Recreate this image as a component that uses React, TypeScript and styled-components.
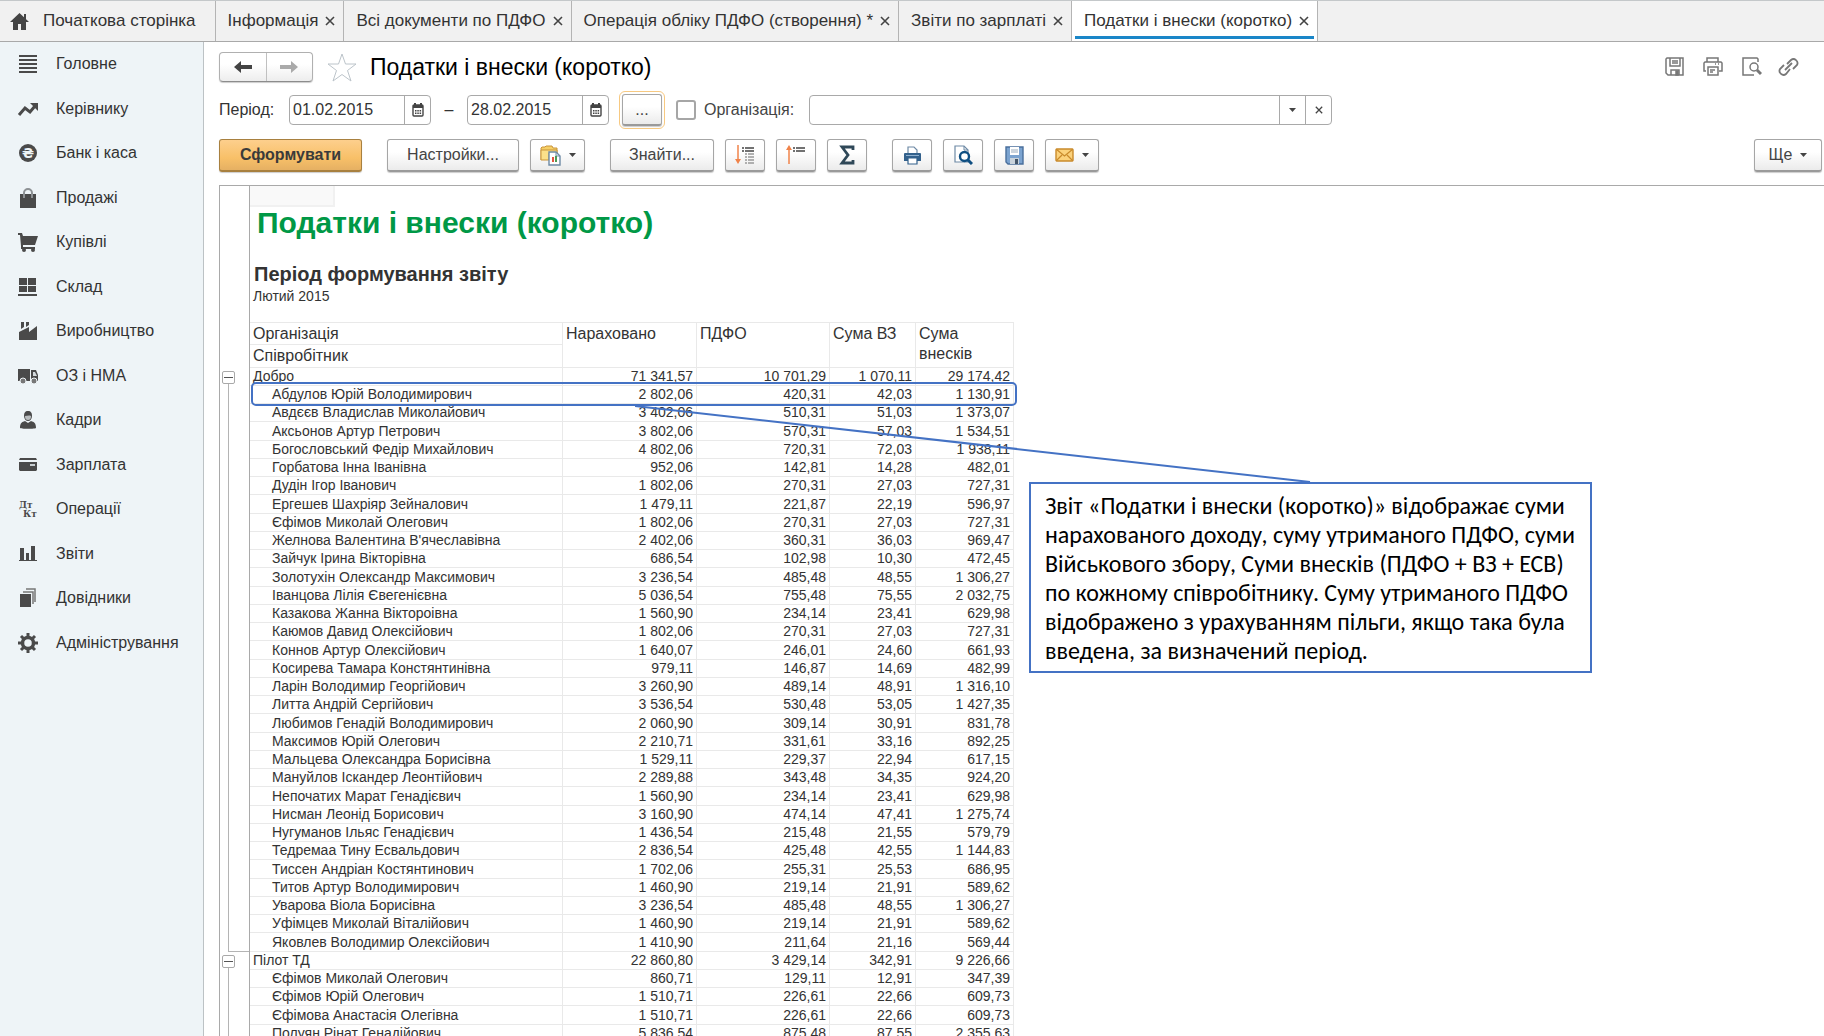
import React from 'react';
import styled, { createGlobalStyle, css } from 'styled-components';

const line = '#a9a9a9';
const grid = '#e9e9e9';
const callout = '#4472c4';

const GlobalStyle = createGlobalStyle`
  *, *::before, *::after { box-sizing: border-box; }
  body {
    margin: 0;
    background: #fff;
    color: #333;
    font: 16px/20px "Liberation Sans", Arial, sans-serif;
  }
  button, input { font: inherit; color: inherit; margin: 0; }
  button { cursor: pointer; }
`;

const Page = styled.div`
  display: flex;
  flex-direction: column;
  height: 100vh;
  overflow: hidden;
`;

/* ---------- tabs ---------- */

const TabBar = styled.header`
  display: flex;
  flex: none;
  height: 42px;
  background: #f1f1f1;
  border-top: 1px solid #c4c8ca;
  border-bottom: 1px solid ${line};
  font-size: 17px;
`;

const Tab = styled.div<{ $active?: boolean }>`
  position: relative;
  display: flex;
  align-items: center;
  padding: 0 7px 0 12px;
  gap: 6px;
  white-space: nowrap;
  border-right: 1px solid #b4b4b4;
  background: ${p => (p.$active ? '#fff' : 'transparent')};
  ${p =>
    p.$active &&
    css`
      &::after {
        content: '';
        position: absolute;
        left: 3px;
        right: 3px;
        bottom: 2px;
        height: 3px;
        background: #1a86c8;
      }
    `}
`;

const HomeTab = styled(Tab)`
  padding: 0 19px 0 10px;
  gap: 14px;
`;

const TabLabel = styled.button`
  border: 0;
  padding: 0;
  background: none;
`;

const CloseButton = styled.button`
  display: flex;
  border: 0;
  padding: 1px;
  background: none;
`;

/* ---------- side menu ---------- */

const Body = styled.div`
  display: flex;
  flex: 1;
  min-height: 0;
`;

const SideBar = styled.nav`
  flex: none;
  width: 204px;
  background: #eef4f7;
  border-right: 1px solid #bcc2c5;
`;

const Menu = styled.ul`
  list-style: none;
  margin: 0;
  padding: 0;
`;

const MenuItem = styled.li`
  height: 44px;
  &:nth-child(even) { height: 45px; }
`;

const MenuLink = styled.a`
  display: flex;
  align-items: center;
  gap: 17px;
  height: 100%;
  padding-left: 17px;
  color: #333;
  text-decoration: none;
`;

/* ---------- form ---------- */

const Main = styled.main`
  display: flex;
  flex: 1;
  flex-direction: column;
  min-width: 0;
  padding: 10px 0 0 15px;
`;

const TitleRow = styled.div`
  display: flex;
  align-items: center;
  height: 30px;
  padding-right: 24px;
`;

const NavButtons = styled.div`
  display: flex;
  width: 94px;
  height: 30px;
  border: 1px solid #b0b0b0;
  border-bottom-color: #8c8c8c;
  border-radius: 4px;
  background: linear-gradient(#fff 40%, #ededed);
  box-shadow: 0 1px 1px #ccc;
`;

const NavButton = styled.button`
  display: flex;
  flex: 1;
  align-items: center;
  justify-content: center;
  border: 0;
  padding: 0;
  background: none;
  & + & { border-left: 1px solid #c0c0c0; }
`;

const PlainButton = styled.button`
  display: flex;
  border: 0;
  padding: 0;
  background: none;
`;

const StarButton = styled(PlainButton)`
  margin: 0 13px 0 14px;
`;

const Title = styled.h1`
  flex: 1;
  margin: 0;
  color: #000;
  font-size: 23px;
  line-height: 30px;
  font-weight: 400;
`;

const WindowTools = styled.div`
  display: flex;
  gap: 16px;
`;

const FilterRow = styled.div`
  display: flex;
  align-items: center;
  height: 30px;
  margin-top: 13px;
`;

const FieldLabel = styled.label`
  flex: none;
`;

const Field = styled.div<{ $width: number }>`
  display: flex;
  flex: 0 1 ${p => p.$width}px;
  height: 30px;
  border: 1px solid ${line};
  border-radius: 4px;
  background: #fff;
  overflow: hidden;
`;

const TextBox = styled.input`
  flex: 1;
  min-width: 0;
  border: 0;
  padding: 0 0 0 3px;
  outline: 0;
  background: none;
`;

const FieldButton = styled.button`
  display: flex;
  flex: none;
  align-items: center;
  justify-content: center;
  width: 26px;
  border: 0;
  border-left: 1px solid ${line};
  padding: 0;
  background: none;
`;

const Dash = styled.span`
  width: 36px;
  text-align: center;
`;

const CheckBox = styled.input`
  appearance: none;
  width: 20px;
  height: 20px;
  border: 2px solid #a6a6a6;
  border-radius: 3px;
  background: #fff;
`;

const Toolbar = styled.div`
  display: flex;
  justify-content: space-between;
  margin-top: 14px;
  padding-right: 2px;
`;

const ToolGroups = styled.div`
  display: flex;
  gap: 25px;
`;

const ToolGroup = styled.div`
  display: flex;
  gap: 11px;
`;

const ToolButton = styled.button<{ $width?: number; $primary?: boolean; $focused?: boolean }>`
  display: flex;
  flex: none;
  align-items: center;
  justify-content: center;
  gap: 8px;
  width: ${p => p.$width ?? 40}px;
  height: 33px;
  padding: 0;
  color: #444;
  border: 1px solid #a6a6a6;
  border-bottom: 2px solid #9a9a9a;
  border-radius: 3px;
  background: linear-gradient(#fff 40%, #ebebeb);
  box-shadow: 0 1px 1px #ccc;
  ${p =>
    p.$primary &&
    css`
      color: #3a3a3a;
      font-weight: 700;
      border-color: #a8803f;
      background: linear-gradient(#fdcf8d, #f8c068 60%, #e5b063);
    `}
  ${p =>
    p.$focused &&
    css`
      height: 32px;
      outline: 1px solid #f7c981;
      outline-offset: 2px;
    `}
`;

const PeriodPicker = styled.div`
  margin: 0 14px 0 13px;
`;

const OrgLabel = styled(FieldLabel)`
  margin: 0 15px 0 8px;
  color: #444;
`;

const PeriodLabel = styled(FieldLabel)`
  width: 70px;
`;

/* ---------- report ---------- */

const Sheet = styled.section`
  position: relative;
  flex: 1;
  min-height: 0;
  margin-top: 13px;
  border-top: 1px solid ${line};
  border-left: 1px solid ${line};
`;

const ReportHead = styled.div`
  height: 136px;
  margin-left: 29px;
  border-left: 1px solid ${line};
`;

const ActiveCell = styled.div`
  width: 85px;
  height: 21px;
  background: #f9f9f9;
  border: solid #f1f1f1;
  border-width: 0 2px 2px 0;
`;

const ReportTitle = styled.h2`
  margin: 0;
  padding-left: 7px;
  color: #009846;
  font-size: 30px;
  line-height: 32px;
`;

const PeriodTitle = styled.h3`
  margin: 23px 0 0;
  padding-left: 4px;
  font-size: 20px;
  line-height: 24px;
`;

const PeriodValue = styled.p`
  margin: 0;
  padding-left: 3px;
  font-size: 14px;
  line-height: 20px;
`;

const Table = styled.table`
  width: 794px;
  table-layout: fixed;
  border-collapse: separate;
  border-spacing: 0;
  font-size: 14px;
  line-height: 17px;
`;

const Col = styled.col<{ $width: number }>`
  width: ${p => p.$width}px;
`;

const HeadCell = styled.th`
  height: 23px;
  padding: 1px 3px 0;
  border: solid ${grid};
  border-width: 0 1px 1px 0;
  font-size: 16px;
  line-height: 20px;
  font-weight: 400;
  text-align: left;
  vertical-align: top;
  thead tr:first-child > & { border-top-width: 1px; }
`;

const HeadGutter = styled.td`
  padding: 0;
  border-right: 1px solid ${line};
`;

const Row = styled.tr`
  height: 18px;
  &:nth-child(4n) { height: 19px; }
`;

type Mark = 'open' | 'inside' | 'last';

const Gutter = styled.td<{ $mark: Mark }>`
  padding: 0 0 0 2px;
  line-height: 0;
  vertical-align: middle;
  border-right: 1px solid ${line};
  background-image: linear-gradient(#b4b4b4, #b4b4b4), linear-gradient(#b4b4b4, #b4b4b4);
  background-repeat: no-repeat;
  background-position: 8px ${p => (p.$mark === 'open' ? 16 : 0)}px, 8px 100%;
  background-size: 1px 100%, ${p => (p.$mark === 'last' ? '100% 1px' : '0 0')};
`;

const Toggle = styled.button`
  display: inline-flex;
  align-items: center;
  justify-content: center;
  width: 13px;
  height: 13px;
  padding: 0;
  border: 1px solid #a9a9a9;
  border-radius: 2px;
  background: #fff;
  &::before {
    content: '';
    width: 9px;
    height: 1px;
    background: #555;
  }
`;

const NameCell = styled.td<{ $nested?: boolean }>`
  padding: 0 0 0 ${p => (p.$nested ? 22 : 3)}px;
  border: solid ${grid};
  border-width: 0 1px 1px 0;
  white-space: nowrap;
`;

const NumCell = styled.td`
  padding: 0 3px 0 0;
  border: solid ${grid};
  border-width: 0 1px 1px 0;
  text-align: right;
  white-space: nowrap;
`;

/* ---------- notes laid over the report ---------- */

const Highlight = styled.div`
  position: absolute;
  left: 31px;
  top: 196px;
  width: 766px;
  height: 24px;
  border: 2px solid ${callout};
  border-radius: 5px;
  pointer-events: none;
`;

const Connector = styled.svg`
  position: absolute;
  left: 415px;
  top: 219px;
  pointer-events: none;
`;

const Note = styled.aside`
  position: absolute;
  left: 809px;
  top: 296px;
  width: 563px;
  height: 191px;
  padding: 7px 0 0 14px;
  border: 2px solid ${callout};
  background: #fff;
  color: #000;
  font-family: Carlito, "Noto Sans", sans-serif;
  font-size: 24px;
  line-height: 29px;
  white-space: nowrap;
`;

/* ---------- icons ---------- */

const Icon = ({ size = 22, children }: { size?: number; children: React.ReactNode }) => (
  <svg width={size} height={size} viewBox="0 0 22 22" fill="#4a4a4a" aria-hidden="true">
    {children}
  </svg>
);

const menu: [string, React.ReactNode][] = [
  ['Головне', <path d="M2 2h18v2H2zM2 6h18v2H2zM2 10h18v2H2zM2 14h18v2H2zM2 18h18v2H2z" />],
  ['Керівнику', <><path d="M2 17l6-7 5 4 5-6" fill="none" stroke="#4a4a4a" strokeWidth="3" /><path d="M13 5h8v8z" /></>],
  ['Банк і каса', <><circle cx="11" cy="11" r="9" /><text x="11" y="16" fontSize="14" fontWeight="700" fill="#eef4f7" textAnchor="middle" fontFamily="DejaVu Sans, sans-serif">₴</text></>],
  ['Продажі', <><path d="M3 7h16v14H3z" /><path d="M7 11V6a4 4 0 0 1 8 0v5" fill="none" stroke="#8d9194" strokeWidth="2" /></>],
  ['Купівлі', <><path d="M1 2h4l1 3h15l-3 9H6v2h12v2H4v-3L3 4H1z" /><circle cx="7" cy="19" r="2" /><circle cx="16" cy="19" r="2" /></>],
  ['Склад', <path d="M2 2h8v7H2zM11 2h8v7h-8zM2 10h8v6H2zM11 10h8v6h-8zM1 18h19v2H1z" />],
  ['Виробництво', <path d="M2 20v-8l10-5v5l8-6v14zM4 2h3v5l-3 2zM9 2h3v3L9 7z" />],
  ['ОЗ і НМА', <><path d="M1 4h12v12H1zM14 5h5l2 5v6h-7z" /><path d="M16 7h2l2 4h-4z" fill="#d4dadd" /><circle cx="6" cy="16" r="3" fill="#777" stroke="#eef4f7" /><circle cx="17" cy="16" r="3" fill="#777" stroke="#eef4f7" /></>],
  ['Кадри', <><path d="M11 2c3 0 4 2 4 5s-2 5-4 5-4-2-4-5 1-5 4-5z" /><path d="M8 7c2 0 4-1 6 0 0 3-1 4-3 4s-3-1-3-4z" fill="#b9bdbf" /><path d="M3 19c0-5 2-6 5-7l3 2 3-2c3 1 5 2 5 7 0 1-16 1-16 0z" /></>],
  ['Зарплата', <><path d="M3 4h16l1 2H2z" /><path d="M2 8h18v8l-1 1H3l-1-1z" /><path d="M13 10h5v2h-5z" fill="#c9cfd2" /></>],
  ['Операції', <g fontFamily="DejaVu Serif, serif" fontWeight="700" fontSize="9"><text x="2" y="10">Дт</text><text x="6" y="19">Кт</text></g>],
  ['Звіти', <path d="M3 5h4v12H3zM9 10h3v7H9zM14 3h4v14h-4zM2 17h18v1H2z" />],
  ['Довідники', <><path d="M3 7h11v13H3z" /><path d="M6 5h10v12M9 2h9v13" fill="none" stroke="#777" strokeWidth="1.500" /></>],
  ['Адміністрування', <g fill="none" stroke="#4a4a4a"><circle cx="11" cy="11" r="5.500" strokeWidth="3.500" /><path d="M11 1v4M11 17v4M1 11h4M17 11h4M4 4l3 3M15 15l3 3M18 4l-3 3M4 18l3-3" strokeWidth="3" /></g>],
];

const Cross = ({ size = 10 }: { size?: number }) => (
  <svg width={size} height={size} viewBox="0 0 10 10" stroke="#444" strokeWidth="1.600" aria-hidden="true">
    <path d="M1 1l8 8M9 1L1 9" />
  </svg>
);

const Caret = () => (
  <svg width="7" height="4" viewBox="0 0 7 4" aria-hidden="true">
    <path d="M0 0h7L3.5 4z" fill="#444" />
  </svg>
);

const Arrow = ({ color, flip }: { color: string; flip?: boolean }) => (
  <svg width="18" height="14" viewBox="0 0 18 14" aria-hidden="true">
    <path d={flip ? 'M18 7l-7-6v4H0v4h11v4z' : 'M0 7l7-6v4h11v4H7v4z'} fill={color} />
  </svg>
);

const Calendar = () => (
  <svg width="12" height="14" viewBox="0 0 12 14" aria-hidden="true">
    <rect x="1" y="2" width="10" height="11" rx="1" fill="#fff" stroke="#444" strokeWidth="1.4" />
    <path d="M1 2h10v3H1zM2 0h2v3H2zM8 0h2v3H8z" fill="#444" />
    <path d="M3 7h1.5v1.5H3zM5.3 7h1.5v1.5H5.3zM7.6 7h1.5v1.5H7.6zM3 9.6h1.5v1.5H3zM5.3 9.6h1.5v1.5H5.3zM7.6 9.6h1.5v1.5H7.6z" fill="#444" />
  </svg>
);

const FolderReport = () => (
  <svg width="21" height="21" viewBox="0 0 21 21" aria-hidden="true">
    <path d="M1 15V3l1-1h3l1-1h6l1 2h4v5" fill="#f6d067" stroke="#c9943a" />
    <path d="M1 15V5h16v3H9v7z" fill="#fbe08a" stroke="#c9943a" />
    <path d="M9 7h7l4 4v9H9z" fill="#fff" stroke="#6e8aa5" strokeWidth="1.4" />
    <path d="M16 7v4h4" fill="none" stroke="#6e8aa5" />
    <path d="M12 12h2v5h-2z" fill="#e2533f" /><path d="M15 11h2v6h-2z" fill="#4c9a53" />
  </svg>
);

const Expand = () => (
  <svg width="20" height="20" viewBox="0 0 20 20" aria-hidden="true">
    <path d="M3 0v16" stroke="#f0834a" strokeWidth="1.500" /><path d="M0 14h6l-3 5z" fill="#f0834a" />
    <path d="M7 3h2M10 3h9M7 6h2M10 6h9" stroke="#444" strokeWidth="1.600" />
    <path d="M10 9h2M13 9h6M10 12h2M13 12h6M10 15h2M13 15h6M10 18h2M13 18h6" stroke="#999" strokeWidth="1.600" />
  </svg>
);

const Collapse = () => (
  <svg width="20" height="20" viewBox="0 0 20 20" aria-hidden="true">
    <path d="M3 3v16" stroke="#f0834a" strokeWidth="1.500" /><path d="M0 5h6L3 0z" fill="#f0834a" />
    <path d="M7 3h2M10 3h9M7 6h2M10 6h9" stroke="#444" strokeWidth="1.600" />
  </svg>
);

const Sigma = () => (
  <svg width="16" height="20" viewBox="0 0 16 20" aria-hidden="true">
    <path d="M14 5V2H3l6 8-6 8h11v-3" fill="none" stroke="#2f4858" strokeWidth="2.800" />
  </svg>
);

const Printer = () => (
  <svg width="19" height="19" viewBox="0 0 19 19" aria-hidden="true">
    <path d="M5 8V1h6l3 3v4" fill="#fff" stroke="#6e8aa5" strokeWidth="1.2" />
    <path d="M1 8q0-1 1-1h15q1 0 1 1v7H1z" fill="#33618c" />
    <path d="M3 9h13v1H3z" fill="#8fb0cf" />
    <path d="M5 12h9v6H5z" fill="#fff" stroke="#33618c" strokeWidth="1.2" />
  </svg>
);

const Preview = () => (
  <svg width="19" height="20" viewBox="0 0 19 20" aria-hidden="true">
    <path d="M1 1h9l4 4v12H1z" fill="#fff" stroke="#6e8aa5" strokeWidth="1.2" />
    <path d="M10 1v4h4" fill="none" stroke="#6e8aa5" />
    <circle cx="10.500" cy="11.500" r="4.500" fill="#fff" stroke="#0f4f82" strokeWidth="2.400" />
    <path d="M14 15l4 4" stroke="#0f4f82" strokeWidth="3" />
  </svg>
);

const Save = () => (
  <svg width="19" height="19" viewBox="0 0 19 19" aria-hidden="true">
    <path d="M1 1h17v17H3l-2-2z" fill="#7ba3d0" stroke="#4a6f9c" strokeWidth="1.400" />
    <path d="M5 1h9v8H5z" fill="#fff" /><path d="M6 4h7M6 6h7" stroke="#9ab" />
    <path d="M5 12h9v6H5z" fill="#c9d3dc" /><path d="M10 13h3v5h-3z" fill="#44566a" />
  </svg>
);

const Mail = () => (
  <svg width="19" height="14" viewBox="0 0 19 14" aria-hidden="true">
    <rect x="1" y="1" width="17" height="12" rx="1" fill="#fbd27c" stroke="#c98a2b" strokeWidth="1.400" />
    <path d="M1 1l8.500 7L18 1M1 13l6-6M18 13l-6-6" fill="none" stroke="#c98a2b" strokeWidth="1.200" />
  </svg>
);

const outlineIcons: [string, React.ReactNode][] = [
  ['Зберегти', <><path d="M3 2h16v17H4l-2-2V3z" /><path d="M6 2v8h10V2M8 5h6M8 7h6" /><path d="M7 19v-5h8v5" /><path d="M12 15h2v4h-2z" fill="#777" /></>],
  ['Друк', <><path d="M5 6V2h11v4M4 15H2V7l1-1h16l1 1v8h-3" /><path d="M6 11h10v8H6zM8 14h5M8 16h3M13 8h1M16 8h1" /></>],
  ['Попередній перегляд', <><path d="M18 6V3l-1-1H3v17h11" /><circle cx="14" cy="11" r="4" /><path d="M17 14l4 4" strokeWidth="3" /></>],
  ['Посилання', <><path d="M9 8l4-4a4 4 0 0 1 6 5l-4 4M12 13l-4 5a4 4 0 0 1-6-5l4-4M7 14l7-7" strokeWidth="1.800" /></>],
];

/* ---------- data ---------- */

type Line = [string, string, string, string, string];
type Group = { total: Line; people: Line[] };

const groups: Group[] = [
  {
    total: ['Добро', '71 341,57', '10 701,29', '1 070,11', '29 174,42'],
    people: [
      ['Абдулов Юрій Володимирович', '2 802,06', '420,31', '42,03', '1 130,91'],
      ['Авдєєв Владислав Миколайович', '3 402,06', '510,31', '51,03', '1 373,07'],
      ['Аксьонов Артур Петрович', '3 802,06', '570,31', '57,03', '1 534,51'],
      ['Богословський Федір Михайлович', '4 802,06', '720,31', '72,03', '1 938,11'],
      ['Горбатова Інна Іванівна', '952,06', '142,81', '14,28', '482,01'],
      ['Дудін Ігор Іванович', '1 802,06', '270,31', '27,03', '727,31'],
      ['Ергешев Шахріяр Зейналович', '1 479,11', '221,87', '22,19', '596,97'],
      ['Єфімов Миколай Олегович', '1 802,06', '270,31', '27,03', '727,31'],
      ["Желнова Валентина В'ячеславівна", '2 402,06', '360,31', '36,03', '969,47'],
      ['Зайчук Ірина Вікторівна', '686,54', '102,98', '10,30', '472,45'],
      ['Золотухін Олександр Максимович', '3 236,54', '485,48', '48,55', '1 306,27'],
      ['Іванцова Лілія Євегенієвна', '5 036,54', '755,48', '75,55', '2 032,75'],
      ['Казакова Жанна Віктороівна', '1 560,90', '234,14', '23,41', '629,98'],
      ['Каюмов Давид Олексійович', '1 802,06', '270,31', '27,03', '727,31'],
      ['Коннов Артур Олексійович', '1 640,07', '246,01', '24,60', '661,93'],
      ['Косирева Тамара Констянтинівна', '979,11', '146,87', '14,69', '482,99'],
      ['Ларін Володимир Георгійович', '3 260,90', '489,14', '48,91', '1 316,10'],
      ['Литта Андрій Сергійович', '3 536,54', '530,48', '53,05', '1 427,35'],
      ['Любимов Генадій Володимирович', '2 060,90', '309,14', '30,91', '831,78'],
      ['Максимов Юрій Олегович', '2 210,71', '331,61', '33,16', '892,25'],
      ['Мальцева Олександра Борисівна', '1 529,11', '229,37', '22,94', '617,15'],
      ['Мануйлов Іскандер Леонтійович', '2 289,88', '343,48', '34,35', '924,20'],
      ['Непочатих Марат Генадієвич', '1 560,90', '234,14', '23,41', '629,98'],
      ['Нисман Леонід Борисович', '3 160,90', '474,14', '47,41', '1 275,74'],
      ['Нугуманов Ільяс Генадієвич', '1 436,54', '215,48', '21,55', '579,79'],
      ['Тедремаа Тину Есвальдович', '2 836,54', '425,48', '42,55', '1 144,83'],
      ['Тиссен Андріан Костянтинович', '1 702,06', '255,31', '25,53', '686,95'],
      ['Титов Артур Володимирович', '1 460,90', '219,14', '21,91', '589,62'],
      ['Уварова Віола Борисівна', '3 236,54', '485,48', '48,55', '1 306,27'],
      ['Уфімцев Миколай Віталійович', '1 460,90', '219,14', '21,91', '589,62'],
      ['Яковлев Володимир Олексійович', '1 410,90', '211,64', '21,16', '569,44'],
    ],
  },
  {
    total: ['Пілот ТД', '22 860,80', '3 429,14', '342,91', '9 226,66'],
    people: [
      ['Єфімов Миколай Олегович', '860,71', '129,11', '12,91', '347,39'],
      ['Єфімов Юрій Олегович', '1 510,71', '226,61', '22,66', '609,73'],
      ['Єфімова Анастасія Олегівна', '1 510,71', '226,61', '22,66', '609,73'],
      ['Полуян Рінат Генадійович', '5 836,54', '875,48', '87,55', '2 355,63'],
    ],
  },
];

const tabs = [
  'Інформація',
  'Всі документи по ПДФО',
  'Операція обліку ПДФО (створення) *',
  'Звіти по зарплаті',
  'Податки і внески (коротко)',
];

const noteLines = [
  'Звіт «Податки і внески (коротко)» відображає суми',
  'нарахованого доходу, суму утриманого ПДФО, суми',
  'Військового збору, Суми внесків (ПДФО + ВЗ + ЕСВ)',
  'по кожному співробітнику. Суму утриманого ПДФО',
  'відображено з урахуванням пільги, якщо така була',
  'введена, за визначений період.',
];

const DateField = ({ id, label, value }: { id: string; label?: string; value: string }) => (
  <Field $width={142}>
    <TextBox id={id} aria-label={label} defaultValue={value} />
    <FieldButton aria-label="Календар"><Calendar /></FieldButton>
  </Field>
);

const ReportRow = ({ data, mark }: { data: Line; mark: Mark }) => (
  <Row>
    <Gutter $mark={mark}>{mark === 'open' && <Toggle aria-label="Згорнути" />}</Gutter>
    <NameCell $nested={mark !== 'open'}>{data[0]}</NameCell>
    {data.slice(1).map((n, i) => <NumCell key={i}>{n}</NumCell>)}
  </Row>
);

export default function App() {
  return (
    <Page>
      <GlobalStyle />
      <TabBar>
        <HomeTab>
          <svg width="19" height="17" viewBox="0 0 19 17" fill="#444" aria-hidden="true">
            <path d="M9.500 0L19 9h-3v8h-5v-6H8v6H3V9H0z" /><path d="M14 1h2v5h-2z" />
          </svg>
          <TabLabel>Початкова сторінка</TabLabel>
        </HomeTab>
        {tabs.map((t, i) => (
          <Tab key={t} $active={i === tabs.length - 1}>
            <TabLabel>{t}</TabLabel>
            <CloseButton aria-label="Закрити"><Cross /></CloseButton>
          </Tab>
        ))}
      </TabBar>
      <Body>
        <SideBar>
          <Menu>
            {menu.map(([name, icon]) => (
              <MenuItem key={name}>
                <MenuLink href="#"><Icon>{icon}</Icon>{name}</MenuLink>
              </MenuItem>
            ))}
          </Menu>
        </SideBar>
        <Main>
          <TitleRow>
            <NavButtons>
              <NavButton aria-label="Назад"><Arrow color="#444" /></NavButton>
              <NavButton aria-label="Вперед"><Arrow color="#aaa" flip /></NavButton>
            </NavButtons>
            <StarButton aria-label="Обране">
              <svg width="30" height="29" viewBox="0 0 30 29" fill="#fff" stroke="#bcc4ca" aria-hidden="true">
                <path d="M15 1l3.500 10H29l-8.500 6.500L24 28l-9-6.500L6 28l3.500-10.500L1 11h10.500z" />
              </svg>
            </StarButton>
            <Title>Податки і внески (коротко)</Title>
            <WindowTools>
              {outlineIcons.map(([name, icon]) => (
                <PlainButton key={name} aria-label={name}>
                  <svg width="22" height="22" viewBox="0 0 22 22" fill="none" stroke="#777" strokeWidth="1.500" aria-hidden="true">{icon}</svg>
                </PlainButton>
              ))}
            </WindowTools>
          </TitleRow>
          <FilterRow>
            <PeriodLabel htmlFor="from">Період:</PeriodLabel>
            <DateField id="from" value="01.02.2015" />
            <Dash>–</Dash>
            <DateField id="to" label="Кінець періоду" value="28.02.2015" />
            <PeriodPicker><ToolButton $focused aria-label="Вибрати період">...</ToolButton></PeriodPicker>
            <CheckBox type="checkbox" id="useOrg" />
            <OrgLabel htmlFor="useOrg">Організація:</OrgLabel>
            <Field $width={523}>
              <TextBox aria-label="Організація" />
              <FieldButton aria-label="Вибрати"><Caret /></FieldButton>
              <FieldButton aria-label="Очистити"><Cross size={8} /></FieldButton>
            </Field>
          </FilterRow>
          <Toolbar>
            <ToolGroups>
              <ToolButton $primary $width={143}>Сформувати</ToolButton>
              <ToolGroup>
                <ToolButton $width={132}>Настройки...</ToolButton>
                <ToolButton $width={55} aria-label="Варіанти звіту"><FolderReport /><Caret /></ToolButton>
              </ToolGroup>
              <ToolGroup>
                <ToolButton $width={104}>Знайти...</ToolButton>
                <ToolButton aria-label="Розгорнути групи"><Expand /></ToolButton>
                <ToolButton aria-label="Згорнути групи"><Collapse /></ToolButton>
                <ToolButton aria-label="Сума"><Sigma /></ToolButton>
              </ToolGroup>
              <ToolGroup>
                <ToolButton aria-label="Друк"><Printer /></ToolButton>
                <ToolButton aria-label="Перегляд"><Preview /></ToolButton>
                <ToolButton aria-label="Зберегти"><Save /></ToolButton>
                <ToolButton $width={54} aria-label="Надіслати"><Mail /><Caret /></ToolButton>
              </ToolGroup>
            </ToolGroups>
            <ToolButton $width={68}>Ще <Caret /></ToolButton>
          </Toolbar>
          <Sheet>
            <ReportHead>
              <ActiveCell />
              <ReportTitle>Податки і внески (коротко)</ReportTitle>
              <PeriodTitle>Період формування звіту</PeriodTitle>
              <PeriodValue>Лютий 2015</PeriodValue>
            </ReportHead>
            <Table>
              <colgroup>
                {[30, 313, 134, 133, 86, 98].map((w, i) => <Col key={i} $width={w} />)}
              </colgroup>
              <thead>
                <tr>
                  <HeadGutter rowSpan={2} />
                  <HeadCell>Організація</HeadCell>
                  <HeadCell rowSpan={2}>Нараховано</HeadCell>
                  <HeadCell rowSpan={2}>ПДФО</HeadCell>
                  <HeadCell rowSpan={2}>Сума ВЗ</HeadCell>
                  <HeadCell rowSpan={2}>Сума внесків</HeadCell>
                </tr>
                <tr>
                  <HeadCell>Співробітник</HeadCell>
                </tr>
              </thead>
              <tbody>
                {groups.flatMap((g, gi) => [
                  <ReportRow key={g.total[0]} data={g.total} mark="open" />,
                  ...g.people.map((p, i) => (
                    <ReportRow key={gi + p[0]} data={p} mark={gi === 0 && i === g.people.length - 1 ? 'last' : 'inside'} />
                  )),
                ])}
              </tbody>
            </Table>
            <Highlight />
            <Connector width="676" height="78" viewBox="0 0 676 78" aria-hidden="true">
              <path d="M0 1L675 77" stroke={callout} strokeWidth="2" />
            </Connector>
            <Note>
              {noteLines.map(l => <div key={l}>{l}</div>)}
            </Note>
          </Sheet>
        </Main>
      </Body>
    </Page>
  );
}
